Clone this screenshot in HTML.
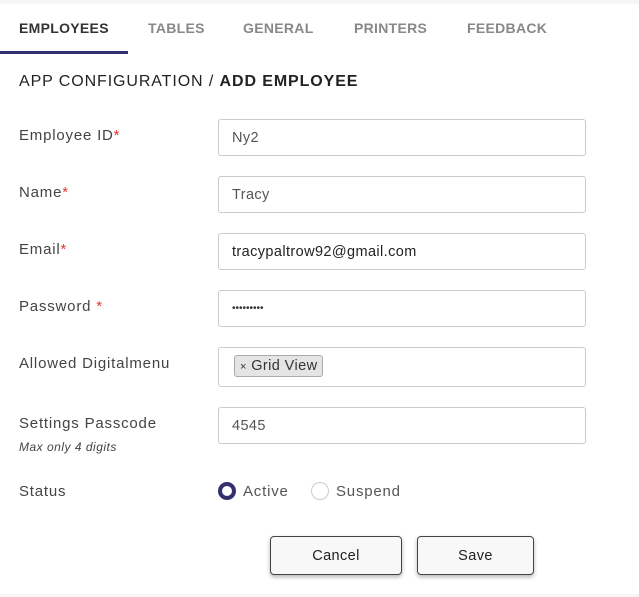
<!DOCTYPE html>
<html><head><style>
body{margin:0;width:639px;height:597px;background:#fff;font-family:"Liberation Sans",sans-serif;position:relative;overflow:hidden;color:#333}
.a{position:absolute;white-space:nowrap}
.tab{top:20px;font-size:14px;font-weight:bold;color:#888;letter-spacing:.3px}
.lbl{left:19px;font-size:15px;color:#444;letter-spacing:.8px}
.req{color:#e53935}
.in{position:absolute;left:218px;width:368px;height:35px;border:1px solid #ccc;border-radius:3px;box-sizing:border-box;font-size:14.5px;color:#555;padding:10px 0 0 13px;letter-spacing:.4px}
.btn{position:absolute;top:536px;height:39px;border:1px solid #444;border-radius:4px;box-sizing:border-box;background:#f8f8f8;box-shadow:0 2px 4px rgba(0,0,0,.3);font-size:14.5px;color:#222;text-align:center;line-height:38px;letter-spacing:.4px}
</style></head><body>
<div class="a" style="left:0;top:0;width:639px;height:4px;background:#f6f6f6"></div>
<div class="a" style="left:0;top:594px;width:639px;height:3px;background:#f6f6f6"></div>
<div class="a tab" style="left:19px;color:#333">EMPLOYEES</div>
<div class="a tab" style="left:148px">TABLES</div>
<div class="a tab" style="left:243px">GENERAL</div>
<div class="a tab" style="left:354px">PRINTERS</div>
<div class="a tab" style="left:467px">FEEDBACK</div>
<div class="a" style="left:0;top:51px;width:128px;height:3px;background:#33306e"></div>
<div class="a" style="left:19px;top:73px;font-size:16px;color:#222;letter-spacing:.9px">APP CONFIGURATION / <b>ADD EMPLOYEE</b></div>
<div class="a lbl" style="top:127px">Employee ID<span class="req">*</span></div>
<div class="in" style="top:119px;height:37px">Ny2</div>
<div class="a lbl" style="top:184px">Name<span class="req">*</span></div>
<div class="in" style="top:176px;height:37px">Tracy</div>
<div class="a lbl" style="top:241px">Email<span class="req">*</span></div>
<div class="in" style="top:233px;height:37px;color:#222">tracypaltrow92@gmail.com</div>
<div class="a lbl" style="top:298px">Password <span class="req">*</span></div>
<div class="in" style="top:290px;height:37px;font-size:10px;padding-top:12px;letter-spacing:0;color:#333">•••••••••</div>
<div class="a lbl" style="top:355px">Allowed Digitalmenu</div>
<div class="in" style="top:347px;height:40px;padding:7px 0 0 15px"><span style="display:inline-block;background:#e4e4e4;border:1px solid #aaa;border-radius:3px;padding:2px 5px;font-size:14.5px;color:#333"><span style="font-size:11px">×</span> Grid View</span></div>
<div class="a lbl" style="top:415px">Settings Passcode</div>
<div class="a" style="left:19px;top:440px;font-size:12px;font-style:italic;color:#444;letter-spacing:.5px">Max only 4 digits</div>
<div class="in" style="top:407px;height:37px">4545</div>
<div class="a lbl" style="top:483px">Status</div>
<div class="a" style="left:218px;top:482px;width:10px;height:10px;border:4px solid #33306e;border-radius:50%"></div>
<div class="a" style="left:243px;top:483px;font-size:15px;color:#555;letter-spacing:.8px">Active</div>
<div class="a" style="left:311px;top:482px;width:16px;height:16px;border:1px solid #ccc;border-radius:50%"></div>
<div class="a" style="left:336px;top:483px;font-size:15px;color:#555;letter-spacing:.8px">Suspend</div>
<div class="btn" style="left:270px;width:132px">Cancel</div>
<div class="btn" style="left:417px;width:117px">Save</div>
</body></html>
